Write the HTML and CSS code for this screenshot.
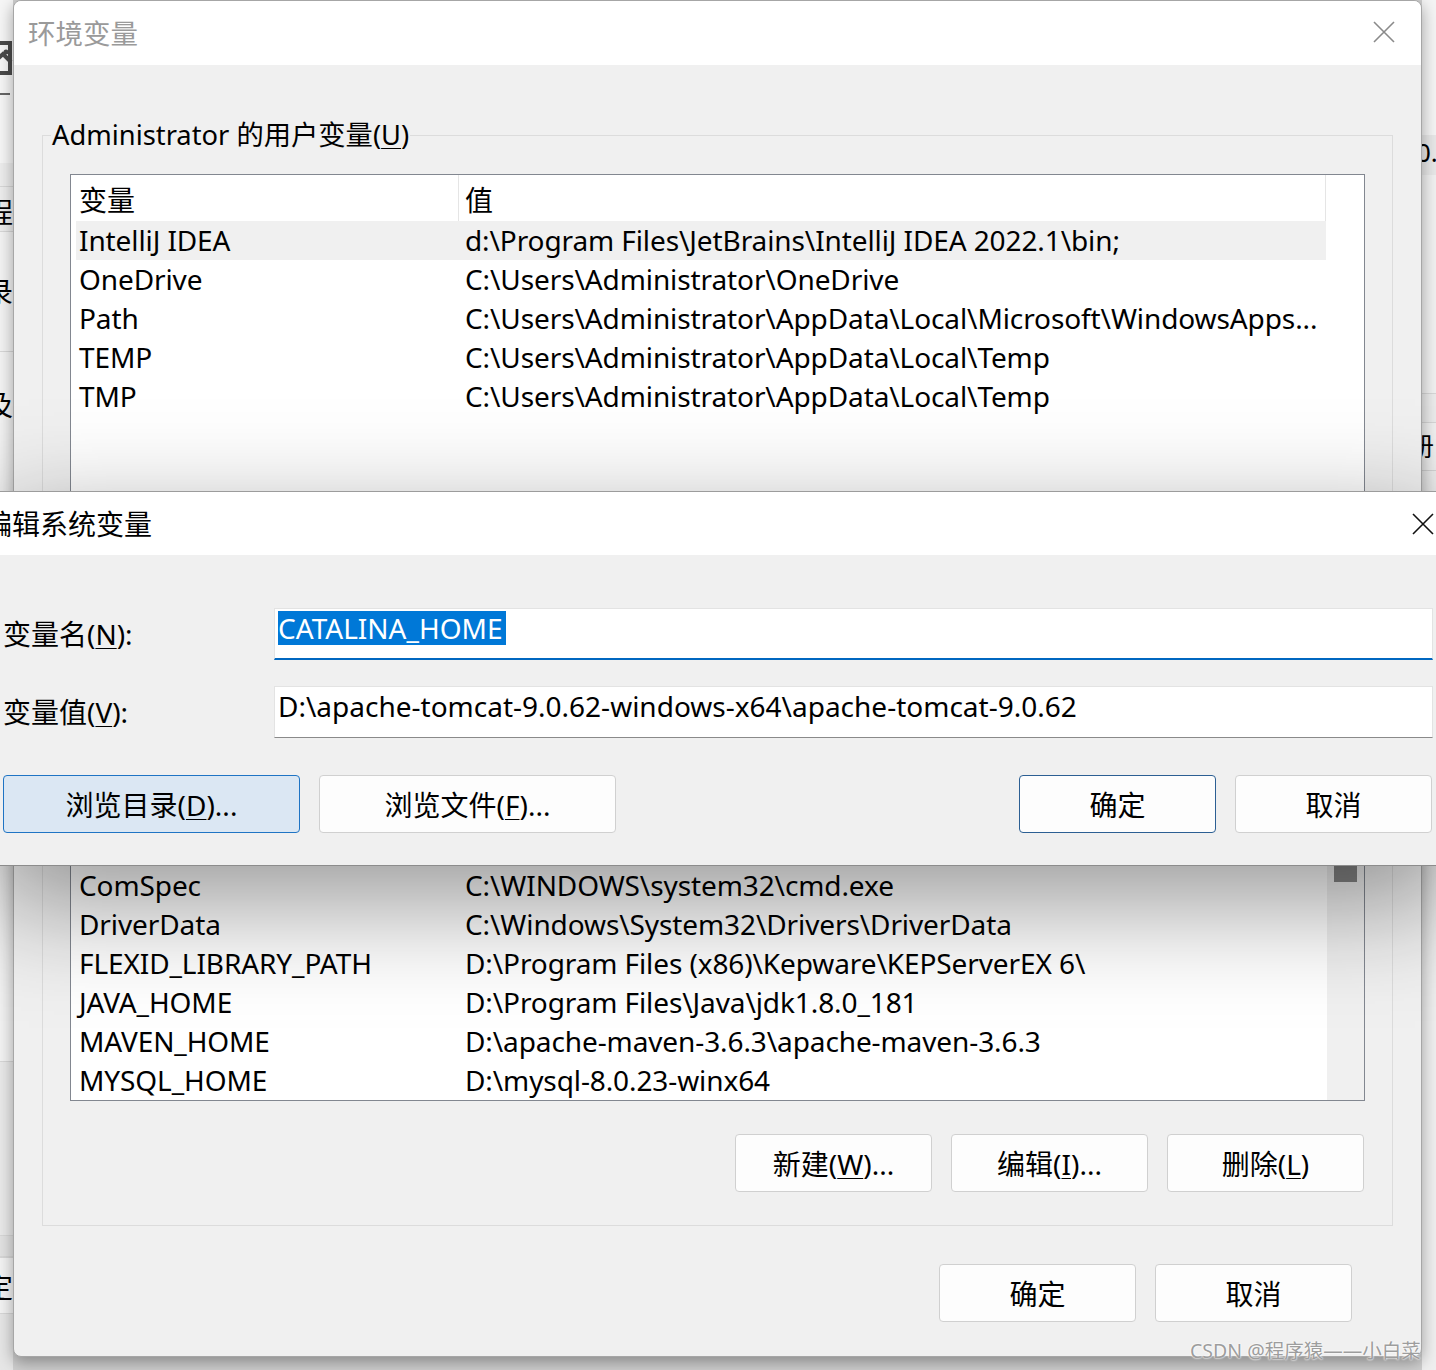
FILE: index.html
```html
<!DOCTYPE html>
<html lang="zh-CN">
<head>
<meta charset="utf-8">
<title>环境变量</title>
<link rel="stylesheet" href="styles.css">
</head>
<body>
<div class="desk">
  <div class="back back-left">
    <div class="bl-top"></div>
    <div class="bl-icon">
      <svg width="36" height="36" viewBox="0 0 36 36"><rect x="3" y="3" width="30" height="30" fill="none" stroke="#4a4a4a" stroke-width="4"/><circle cx="29" cy="12" r="2.5" fill="#4a4a4a"/><path d="M8 31 L26 14 L34 22" fill="none" stroke="#4a4a4a" stroke-width="4"/></svg>
    </div>
    <div class="bl-mark"></div>
    <div class="bl-pane">
      <div class="bl-row bl-r1"></div>
      <div class="bl-row bl-r2"><span class="bl-ch">程</span></div>
      <div class="bl-row bl-r3"><span class="bl-ch">录</span></div>
      <div class="bl-row bl-r4"><span class="bl-ch">及</span></div>
      <div class="bl-row bl-r5"></div>
      <div class="bl-row bl-r6"></div>
      <div class="bl-row bl-r7"></div>
      <div class="bl-row bl-r8"><span class="bl-ch">定</span></div>
      <div class="bl-row bl-r9"></div>
    </div>
  </div>

  <div class="back back-right">
    <div class="br-top"></div>
    <div class="br-band"><span class="br-txt">0.(</span></div>
    <div class="br-mid"></div>
    <div class="br-row"></div>
    <div class="br-row2"><span class="br-txt">册</span></div>
    <div class="br-rest"></div>
  </div>

  <section class="dlg env">
    <header class="env-title">
      <span class="env-title-text">环境变量</span>
      <svg class="env-close" width="22" height="22" viewBox="0 0 22 22"><path d="M1 1 L21 21 M21 1 L1 21" stroke="#8a8a8a" stroke-width="1.6" fill="none"/></svg>
    </header>
    <div class="env-body">
      <div class="group group-user">
        <div class="group-label">Administrator 的用户变量(<u>U</u>)</div>
        <div class="list list-user">
          <div class="list-main">
            <div class="lv-head"><span class="h1">变量</span><span class="h2">值</span></div>
            <div class="lv-row hot"><span class="c1">IntelliJ IDEA</span><span class="c2">d:\Program Files\JetBrains\IntelliJ IDEA 2022.1\bin;</span></div>
            <div class="lv-row"><span class="c1">OneDrive</span><span class="c2">C:\Users\Administrator\OneDrive</span></div>
            <div class="lv-row"><span class="c1">Path</span><span class="c2">C:\Users\Administrator\AppData\Local\Microsoft\WindowsApps...</span></div>
            <div class="lv-row"><span class="c1">TEMP</span><span class="c2">C:\Users\Administrator\AppData\Local\Temp</span></div>
            <div class="lv-row"><span class="c1">TMP</span><span class="c2">C:\Users\Administrator\AppData\Local\Temp</span></div>
          </div>
        </div>
        <div class="btn-row">
          <div class="btn">新建(<u>N</u>)...</div>
          <div class="btn">编辑(<u>E</u>)...</div>
          <div class="btn">删除(<u>D</u>)</div>
        </div>
      </div>

      <div class="group group-sys">
        <div class="group-label">系统变量(<u>S</u>)</div>
        <div class="list list-sys">
          <div class="list-main">
            <div class="lv-head"><span class="h1">变量</span><span class="h2">值</span></div>
            <div class="lv-row"><span class="c1">asl.log</span><span class="c2">Destination=file</span></div>
            <div class="lv-row"><span class="c1">CLASSPATH</span><span class="c2">.;%JAVA_HOME%\lib\dt.jar;%JAVA_HOME%\lib\tools.jar</span></div>
            <div class="lv-row"><span class="c1">ComSpec</span><span class="c2">C:\WINDOWS\system32\cmd.exe</span></div>
            <div class="lv-row"><span class="c1">DriverData</span><span class="c2">C:\Windows\System32\Drivers\DriverData</span></div>
            <div class="lv-row"><span class="c1">FLEXID_LIBRARY_PATH</span><span class="c2">D:\Program Files (x86)\Kepware\KEPServerEX 6\</span></div>
            <div class="lv-row"><span class="c1">JAVA_HOME</span><span class="c2">D:\Program Files\Java\jdk1.8.0_181</span></div>
            <div class="lv-row"><span class="c1">MAVEN_HOME</span><span class="c2">D:\apache-maven-3.6.3\apache-maven-3.6.3</span></div>
            <div class="lv-row"><span class="c1">MYSQL_HOME</span><span class="c2">D:\mysql-8.0.23-winx64</span></div>
          </div>
          <div class="vscroll"><div class="thumb"></div></div>
        </div>
        <div class="btn-row">
          <div class="btn">新建(<u>W</u>)...</div>
          <div class="btn">编辑(<u>I</u>)...</div>
          <div class="btn">删除(<u>L</u>)</div>
        </div>
      </div>

      <div class="env-foot">
        <div class="btn">确定</div>
        <div class="btn">取消</div>
      </div>
    </div>
  </section>

  <section class="dlg edit">
    <header class="edit-title">
      <span class="edit-title-text">编辑系统变量</span>
      <svg class="edit-close" width="22" height="22" viewBox="0 0 22 22"><path d="M1 1 L21 21 M21 1 L1 21" stroke="#111" stroke-width="1.6" fill="none"/></svg>
    </header>
    <div class="edit-body">
      <div class="form">
        <label class="f-label">变量名(<u>N</u>):</label>
        <div class="f-input focus"><span class="sel">CATALINA_HOME</span></div>
        <label class="f-label">变量值(<u>V</u>):</label>
        <div class="f-input">D:\apache-tomcat-9.0.62-windows-x64\apache-tomcat-9.0.62</div>
      </div>
      <div class="edit-btns">
        <div class="btn-group">
          <div class="btn wide hover">浏览目录(<u>D</u>)...</div>
          <div class="btn wide">浏览文件(<u>F</u>)...</div>
        </div>
        <div class="btn-group">
          <div class="btn default">确定</div>
          <div class="btn">取消</div>
        </div>
      </div>
    </div>
  </section>

  <div class="watermark">CSDN @程序猿——小白菜</div>
</div>
</body>
</html>
```
FILE: styles.css
```css
html, body {
  margin: 0;
  padding: 0;
  overflow: hidden;
}
body {
  background: #d9d9d9;
  font-family: "Noto Sans", "Noto Sans CJK SC", sans-serif;
  font-size: 28px;
  color: #000;
}
u { text-decoration-thickness: 1px; text-underline-offset: 3px; }

.desk {
  position: relative;
  width: 1436px;
  height: 1370px;
  overflow: hidden;
  background: #cfcfcf;
}

/* ---------- background windows ---------- */
.back {
  position: absolute;
  top: 0;
  height: 1370px;
  overflow: hidden;
  display: flex;
  flex-direction: column;
}
.back-left { left: 0; width: 13px; background: #f6f6f6; }
.bl-top { height: 40px; flex: none; }
.bl-icon { height: 38px; flex: none; margin-left: -23px; }
.bl-mark { height: 85px; flex: none; margin-left: -10px; }
.bl-mark::before { content: ""; display: block; margin-top: 15px; width: 20px; height: 4px; border-top: 2px solid #666; }
.bl-pane { flex: 1; background: #ededed; display: flex; flex-direction: column; }
.bl-row { flex: none; border-bottom: 1px solid #d7d7d7; position: relative; }
.bl-ch { display: block; margin-left: -15px; font-size: 28px; line-height: 30px; }
.bl-r1 { height: 23px; }
.bl-r2 { height: 45px; padding-top: 10px; box-sizing: border-box; }
.bl-r3 { height: 120px; padding-top: 45px; box-sizing: border-box; background: #f3f3f3; }
.bl-r4 { height: 710px; padding-top: 38px; box-sizing: border-box; background: #f3f3f3; }
.bl-r5 { height: 173px; background: #e9e9e9; }
.bl-r6 { height: 20px; background: #e2e2e2; }
.bl-r7 { height: 0; }
.bl-r8 { height: 56px; padding-top: 14px; box-sizing: border-box; background: #f3f3f3; }
.bl-r9 { flex: 1; background: #e6e6e6; border-bottom: 0; }

.back-right { left: 1422px; width: 14px; background: #f4f4f4; }
.br-top { height: 135px; flex: none; }
.br-band { height: 40px; flex: none; background: #e7e7e7; }
.br-txt { display: block; margin-left: -6px; font-size: 26px; line-height: 34px; }
.br-mid { height: 218px; flex: none; background: #f0f0f0; border-bottom: 1px solid #d6d6d6; }
.br-row { height: 28px; flex: none; background: #ebebeb; border-bottom: 1px solid #d6d6d6; }
.br-row2 { height: 47px; flex: none; background: #f0f0f0; border-bottom: 1px solid #d6d6d6; }
.br-row2 .br-txt { margin-left: -14px; padding-top: 6px; }
.br-rest { flex: 1; background: #efefef; }

/* ---------- environment dialog ---------- */
.env {
  position: relative;
  z-index: 1;
  margin-left: 13px;
  width: 1409px;
  height: 1357px;
  box-sizing: border-box;
  border: 1px solid #a6a6a6;
  border-radius: 8px;
  background: #f0f0f0;
  box-shadow: 0 5px 16px rgba(0, 0, 0, 0.35);
  overflow: hidden;
  display: flex;
  flex-direction: column;
}
.env-title {
  height: 64px;
  flex: none;
  background: #fff;
  display: flex;
  align-items: center;
  justify-content: space-between;
  padding-left: 14px;
  padding-right: 26px;
}
.env-title-text { color: #9a9a9a; line-height: 34px; padding-top: 2px; font-size: 27.5px; }
.env-close { display: block; margin-top: -2px; }

.env-body {
  flex: 1;
  padding: 70px 28px 0 28px;
  display: flex;
  flex-direction: column;
}

.group {
  position: relative;
  border: 1px solid #dcdcdc;
  padding: 38px 28px 33px 27px;
}
.group-user { height: 545px; box-sizing: border-box; }
.group-sys { margin-top: 22px; }
.group-label {
  position: absolute;
  top: -18px;
  left: 8px;
  padding: 0 1px;
  background: #f0f0f0;
  line-height: 34px;
  white-space: nowrap;
  font-size: 27.3px;
}

.list {
  border: 1px solid #828790;
  background: #fff;
  display: flex;
  box-sizing: border-box;
  margin-right: -1px;
  overflow: hidden;
}
.list-user { height: 380px; }
.list-sys { height: 360px; }
.list-main { flex: 1; padding-left: 5px; overflow: hidden; }
.list-sys .list-main { flex: none; width: 1256px; box-sizing: border-box; }

.lv-head {
  width: 1250px;
  height: 46px;
  display: flex;
  line-height: 44px;
}
.h1 {
  width: 383px;
  flex: none;
  box-sizing: border-box;
  padding-left: 3px;
  padding-top: 3px;
  border-right: 1px solid #e5e5e5;
}
.h2 {
  flex: 1;
  padding-left: 6px;
  padding-top: 3px;
  border-right: 1px solid #e5e5e5;
}
.lv-row {
  width: 1250px;
  height: 39px;
  display: flex;
  line-height: 39px;
  white-space: nowrap;
  letter-spacing: -0.1px;
}
.lv-row.hot { background: #f0f0f0; }
.c1 { width: 386px; flex: none; box-sizing: border-box; padding-left: 3px; overflow: hidden; }
.c2 { flex: 1; padding-left: 3px; overflow: hidden; }

.vscroll {
  width: 37px;
  flex: none;
  margin-left: auto;
  background: #f0f0f0;
}
.thumb {
  margin: 60px 7px 0 7px;
  height: 80px;
  background: #858585;
}

.btn-row {
  margin-top: 33px;
  display: flex;
  justify-content: flex-end;
  gap: 19px;
}
.btn {
  width: 197px;
  height: 58px;
  flex: none;
  box-sizing: border-box;
  border: 1px solid #d0d0d0;
  border-radius: 4px;
  background: #fdfdfd;
  display: flex;
  align-items: center;
  justify-content: center;
  line-height: 34px;
  padding-top: 2px;
  white-space: nowrap;
}

.env-foot {
  margin-top: 38px;
  padding-right: 41px;
  display: flex;
  justify-content: flex-end;
  gap: 19px;
}

/* ---------- edit dialog ---------- */
.edit {
  position: absolute;
  z-index: 2;
  top: 491px;
  left: -8px;
  width: 1460px;
  box-sizing: border-box;
  border-top: 1px solid #9c9c9c;
  border-bottom: 1px solid #8c8c8c;
  background: #f0f0f0;
  box-shadow: 0 35px 105px rgba(0, 0, 0, 0.42);
}
.edit-title {
  height: 63px;
  background: #fff;
  display: flex;
  align-items: center;
  justify-content: space-between;
  padding-right: 18px;
}
.edit-title-text { margin-left: -8px; line-height: 34px; white-space: nowrap; }
.edit-close { display: block; }

.edit-body {
  padding: 53px 19px 32px 11px;
}
.form {
  display: grid;
  grid-template-columns: 271px 1fr;
  row-gap: 26px;
  align-items: center;
}
.f-label { white-space: nowrap; line-height: 34px; }
.f-input {
  height: 52px;
  box-sizing: border-box;
  background: #fff;
  border: 1px solid #e3e3e3;
  border-bottom: 1px solid #8a8a8a;
  padding: 2px 4px 0 3px;
  line-height: 34px;
  white-space: nowrap;
  overflow: hidden;
}
.f-input.focus { border-bottom: 2px solid #0067c0; }
.sel { background: #0078d7; color: #fff; display: inline-block; line-height: 34px; padding-right: 4px; }

.edit-btns {
  margin-top: 37px;
  display: flex;
  justify-content: space-between;
  margin-right: 1px;
}
.btn-group { display: flex; gap: 19px; }
.btn.wide { width: 297px; }
.btn.hover { background: #dbe7f3; border-color: #1f74c4; }
.btn.default { border-color: #2c5f93; }

/* ---------- watermark ---------- */
.watermark {
  position: absolute;
  z-index: 3;
  left: 1190px;
  top: 1337px;
  font-size: 19.5px;
  line-height: 28px;
  color: #9d9d9d;
  white-space: nowrap;
  text-shadow: 0 0 2px #fff, 0 0 2px #fff;
}
```
